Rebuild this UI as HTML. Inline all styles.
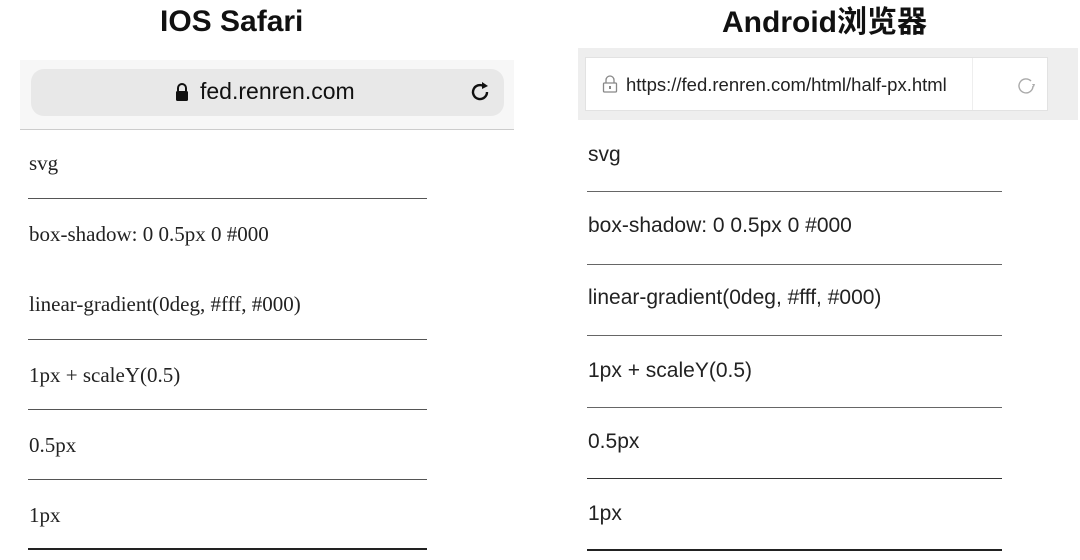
<!DOCTYPE html>
<html><head><meta charset="utf-8"><style>
body{margin:0;width:1080px;height:560px;background:#fff;position:relative;overflow:hidden;font-family:"Liberation Sans","Noto Sans CJK SC",sans-serif}
.a{position:absolute}
.t{font-weight:bold;font-size:30px;color:#111;white-space:nowrap}
.ls{font-family:"Liberation Serif",serif;font-size:21px;color:#222;left:29px}
.rs{font-size:21px;color:#222;left:588px}
.ll{left:28px;width:399px;height:1px;background:#555}
.rl{left:587px;width:415px;height:1px;background:#666}
</style></head><body>
<div class="a t" style="left:160px;top:5px">IOS Safari</div>
<div class="a t" style="left:722px;top:-3px">Android浏览器</div>

<div class="a" style="left:20px;top:60px;width:494px;height:69px;background:#f7f7f7;border-bottom:1px solid #ccc"></div>
<div class="a" style="left:31px;top:69px;width:473px;height:47px;background:#e8e8e8;border-radius:13px"></div>
<svg class="a" style="left:174px;top:82px" width="16" height="20" viewBox="0 0 16 20"><path d="M4 9V6a4 4 0 0 1 8 0v3" fill="none" stroke="#111" stroke-width="2"/><rect x="2" y="9" width="12" height="10" rx="1.5" fill="#111"/></svg>
<div class="a" style="left:200px;top:78px;font-size:23px;color:#111">fed.renren.com</div>
<svg class="a" style="left:469px;top:80px" width="24" height="24" viewBox="0 0 24 24"><path d="M18 12a7 7 0 1 1-3-5.7" fill="none" stroke="#111" stroke-width="2.4"/><path d="M13 2l6 4-6 3z" fill="#111"/></svg>

<div class="a" style="left:578px;top:48px;width:500px;height:72px;background:#eee"></div>
<div class="a" style="left:585px;top:57px;width:461px;height:52px;background:#fff;border:1px solid #e2e2e2"></div>
<div class="a" style="left:972px;top:58px;width:1px;height:52px;background:#eee"></div>
<svg class="a" style="left:602px;top:75px" width="16" height="18" viewBox="0 0 16 18"><path d="M4 8V5a4 4 0 0 1 8 0v3" fill="none" stroke="#888" stroke-width="1.3"/><rect x="1.5" y="8" width="13" height="9" rx="1" fill="none" stroke="#888" stroke-width="1.3"/><rect x="7" y="11" width="2" height="3" fill="#888"/></svg>
<div class="a" style="left:626px;top:74px;font-size:18.5px;color:#222">https://fed.renren.com/html/half-px.html</div>
<svg class="a" style="left:1015px;top:75px" width="22" height="22" viewBox="0 0 22 22"><path d="M18 11a7 7 0 1 1-2-5" fill="none" stroke="#aaa" stroke-width="1.4"/><path d="M17 9l2 3 1-3z" fill="#aaa"/></svg>

<div class="a ls" style="top:151px">svg</div>
<div class="a ll" style="top:198px"></div>
<div class="a ls" style="top:222px">box-shadow: 0 0.5px 0 #000</div>
<div class="a ls" style="top:292px">linear-gradient(0deg, #fff, #000)</div>
<div class="a ll" style="top:339px"></div>
<div class="a ls" style="top:363px">1px + scaleY(0.5)</div>
<div class="a ll" style="top:409px"></div>
<div class="a ls" style="top:433px">0.5px</div>
<div class="a ll" style="top:479px"></div>
<div class="a ls" style="top:503px">1px</div>
<div class="a ll" style="top:548px;height:2px;background:#222"></div>

<div class="a rs" style="top:143px">svg</div>
<div class="a rl" style="top:191px"></div>
<div class="a rs" style="top:214px">box-shadow: 0 0.5px 0 #000</div>
<div class="a rl" style="top:264px"></div>
<div class="a rs" style="top:286px">linear-gradient(0deg, #fff, #000)</div>
<div class="a rl" style="top:335px"></div>
<div class="a rs" style="top:359px">1px + scaleY(0.5)</div>
<div class="a rl" style="top:407px"></div>
<div class="a rs" style="top:430px">0.5px</div>
<div class="a rl" style="top:478px;background:#333"></div>
<div class="a rs" style="top:502px">1px</div>
<div class="a rl" style="top:549px;height:2px;background:#222"></div>
</body></html>
